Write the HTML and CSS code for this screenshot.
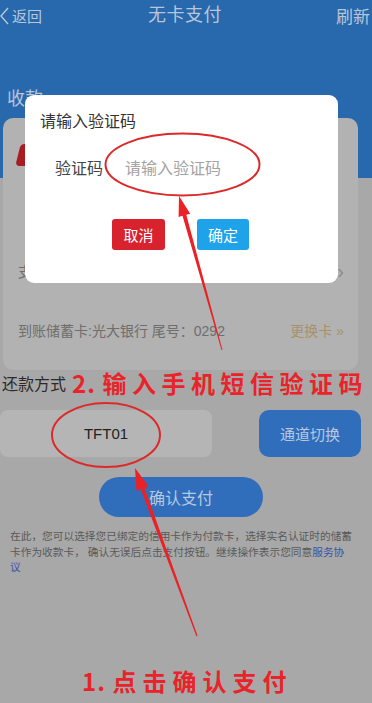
FILE: index.html
```html
<!DOCTYPE html>
<html lang="zh-CN">
<head>
<meta charset="utf-8">
<title>无卡支付</title>
<link rel="stylesheet" href="styles.css">
</head>
<body>
<div class="screen">
  <header class="hero">
    <nav class="topbar">
      <a class="back"><svg class="chev-left" viewBox="0 0 10 20" width="10" height="20"><polyline points="8,2 1,10 8,18" fill="none" stroke="currentColor" stroke-width="1.4"/></svg>返回</a>
      <h1 class="title">无卡支付</h1>
      <a class="refresh">刷新</a>
    </nav>
    <div class="hero-label">收款</div>
  </header>

  <section class="card">
    <div class="bank-row"><span class="bank-logo"></span></div>
    <div class="pay-row"><span>支付卡：信用卡</span><span class="chev-right">›</span></div>
    <div class="recv-row"><span>到账储蓄卡:光大银行 尾号：0292</span><span class="change">更换卡 »</span></div>
  </section>

  <div class="method-row"><span class="method-label">还款方式</span><span class="note note-2"><span class="num">2. </span>输入手机短信验证码</span></div>

  <div class="channel-row">
    <div class="channel-box">TFT01</div>
    <button class="switch-btn">通道切换</button>
  </div>

  <button class="confirm">确认支付</button>

  <p class="terms">在此，您可以选择您已绑定的信用卡作为付款卡，选择实名认证时的储蓄卡作为收款卡， 确认无误后点击支付按钮。继续操作表示您同意<a class="link">服务协议</a></p>

  <div class="note note-1"><span class="num">1. </span>点击确认支付</div>

  <div class="modal">
    <div class="modal-title">请输入验证码</div>
    <div class="modal-field"><span class="field-label">验证码</span><span class="field-input">请输入验证码</span></div>
    <div class="modal-actions">
      <button class="btn btn-cancel">取消</button>
      <button class="btn btn-ok">确定</button>
    </div>
  </div>

  <svg class="marks" viewBox="0 0 372 703" width="372" height="703">
    <ellipse cx="182.5" cy="164.5" rx="77" ry="31" fill="none" stroke="#dc2a2a" stroke-width="2"/>
    <ellipse cx="106" cy="435" rx="54" ry="32" fill="none" stroke="#dc2a2a" stroke-width="2"/>
    <polygon fill="#ea2226" points="179,196 190.2,213.7 186.3,214.8 222.5,349.9 221.5,350.1 182.5,215.8 178.6,216.9"/>
    <polygon fill="#ea2226" points="135,468 148.7,486.4 144.5,487.9 197.6,635.8 196.4,636.2 140.7,489.3 136.5,490.9"/>
  </svg>
</div>
</body>
</html>
```

FILE: styles.css
```css
* { box-sizing: border-box; }
html, body { margin: 0; padding: 0; }
body {
  background: #a8a8a8;
  font-family: "Liberation Sans", "Noto Sans CJK SC", sans-serif;
}
.screen {
  position: relative;
  width: 372px;
  height: 703px;
  overflow: hidden;
  background: #a8a8a8;
}
.hero {
  height: 178px;
  background: #2868ac;
  color: #b9c6da;
}
.topbar {
  height: 31px;
  display: flex;
  align-items: center;
  justify-content: space-between;
}
.back {
  display: flex;
  align-items: center;
  font-size: 15px;
  gap: 2px;
  width: 60px;
}
.chev-left { display: block; }
.title {
  margin: 0;
  font-size: 18px;
  font-weight: normal;
  line-height: 31px;
  letter-spacing: 0.5px;
  margin-left: -2px;
}
.refresh {
  font-size: 17px;
  width: 60px;
  text-align: right;
  padding-right: 2px;
}
.hero-label {
  margin-top: 56px;
  padding-left: 7px;
  font-size: 18px;
  line-height: 24px;
}
.card {
  margin: -60px 0 0 3px;
  width: 355px;
  height: 252px;
  background: #b2b2b2;
  border-radius: 10px;
  padding: 0 14px 0 15px;
  display: flex;
  flex-direction: column;
}
.bank-row {
  flex: 0 0 134px;
  padding-top: 26px;
}
.bank-logo {
  display: block;
  width: 22px;
  height: 22px;
  border-radius: 4px;
  background: #a81c22;
  transform: skewX(-14deg);
}
.pay-row, .recv-row {
  display: flex;
  justify-content: space-between;
  align-items: center;
  font-size: 14px;
  color: #6e6e6e;
}
.pay-row { flex: 0 0 38px; }
.recv-row { flex: 0 0 82px; padding-bottom: 2px; }
.chev-right { font-size: 20px; color: #8a8a8a; }
.change { color: #a8916a; }
.method-row {
  height: 26px;
  display: flex;
  align-items: center;
  padding-left: 2px;
  gap: 6px;
  white-space: nowrap;
}
.method-label {
  flex: 0 0 auto;
  font-size: 16px;
  color: #2a2a2a;
}
.note {
  color: #e8232a;
  font-family: "Noto Sans CJK SC", sans-serif;
  font-weight: 700;
  font-size: 24px;
  letter-spacing: 5.5px;
  line-height: 30px;
  white-space: nowrap;
}
.note-2 { flex: 0 0 auto; }
.num { letter-spacing: 1px; }
.channel-row {
  margin-top: 14px;
  display: flex;
  justify-content: space-between;
  padding-right: 11px;
}
.channel-box {
  width: 212px;
  height: 47px;
  background: #b5b5b5;
  border-radius: 8px;
  display: flex;
  align-items: center;
  justify-content: center;
  font-size: 15px;
  color: #222;
}
.switch-btn {
  width: 102px;
  height: 47px;
  border: 0;
  border-radius: 10px;
  background: #306ebc;
  color: #b8c8e0;
  font-family: inherit;
  font-size: 15px;
}
.confirm {
  display: block;
  margin: 20px 0 0 99px;
  width: 164px;
  height: 40px;
  border: 0;
  border-radius: 20px;
  background: #306ebc;
  color: #b8c8e0;
  font-family: inherit;
  font-size: 16px;
}
.terms {
  margin: 12px 0 0 10px;
  width: 344px;
  font-size: 10.7px;
  line-height: 15.5px;
  color: #5a5a5a;
}
.link { color: #3c50aa; }
.note-1 {
  margin-top: 90px;
  padding-left: 82px;
  font-size: 24px;
  letter-spacing: 6px;
}
.modal {
  position: absolute;
  left: 25px;
  top: 95px;
  width: 313px;
  height: 188px;
  background: #fff;
  border-radius: 9px;
  padding: 15px 0 0 15px;
}
.modal-title {
  font-size: 16px;
  line-height: 24px;
  color: #333;
}
.modal-field {
  margin-top: 21px;
  display: flex;
  align-items: center;
  height: 24px;
  padding-left: 15px;
  font-size: 16px;
}
.field-label { color: #444; width: 70px; }
.field-input { color: #a3a3a3; }
.modal-actions {
  margin-top: 40px;
  display: flex;
  gap: 32px;
  padding-left: 72px;
}
.btn {
  width: 53px;
  height: 31px;
  border: 0;
  border-radius: 3px;
  color: #fff;
  font-family: inherit;
  font-size: 15px;
}
.btn-cancel { background: #d8222d; }
.btn-ok { background: #1ea2ea; width: 52px; }
.marks {
  position: absolute;
  left: 0;
  top: 0;
  pointer-events: none;
}
```
